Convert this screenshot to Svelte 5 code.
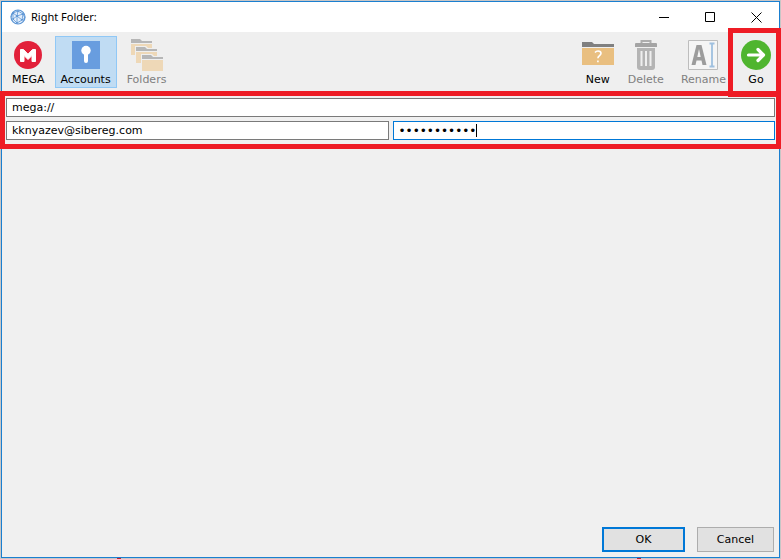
<script>
  let address = $state('mega://');
  let user = $state('kknyazev@sibereg.com');
  let password = $state('abcdefghijk');
</script>

{#snippet folder(x, y)}
  <g transform="translate({x} {y})">
    <path d="M-1-1h11l2 2h10v16H-1z" fill="#efefef" />
    <path d="M0 0h9l2 2h10v2H0z" fill="#b6b6b6" />
    <path d="M0 5h21v11H0z" fill="#eed8b7" />
  </g>
{/snippet}

<div class="desktop">
  <main class="window">
    <header class="titlebar">
      <svg class="globe" width="16" height="16" viewBox="0 0 16 16" fill="none" stroke="#5a94d4">
        <circle cx="8" cy="8" r="7" fill="#e4eefa" stroke-width="1.200" />
        <path d="M3 4l5-2 5 3-1 6-5 3-4-4zM3 4l4 3 6-2M7 7l-4 3M7 7l5 4M7 7l1-5M7 7v7M1 8l2-4M13 5l2 4-3 2" stroke-width=".8" />
        <path d="M2.500 4h1M7.500 2h1M12.500 5h1M6.500 7h1M2.500 10h1M11.500 11h1M6.500 14h1" stroke="#4c88cc" stroke-width="1.400" />
      </svg>
      <h1>Right Folder:</h1>
      <div class="controls">
        <button aria-label="Minimize"><svg width="11" height="11" viewBox="0 0 11 11"><path d="M0 5.500h10" /></svg></button>
        <button aria-label="Maximize"><svg width="11" height="11" viewBox="0 0 11 11"><path d="M.5.5h9v9h-9z" /></svg></button>
        <button aria-label="Close"><svg width="11" height="11" viewBox="0 0 11 11"><path d="M.5.5l10 10M10.500.5l-10 10" /></svg></button>
      </div>
    </header>

    <nav class="toolbar">
      <div class="group">
        <button class="tool">
          <svg width="32" height="32" viewBox="0 0 32 32">
            <circle cx="16" cy="16" r="14" fill="#e2203a" />
            <path d="M8.500 22.500v-12h3l4.500 4.700 4.500-4.700h3v12h-3.500v-6L16 20.500l-4-4v6z" fill="#fff" stroke="#fff" stroke-width="1" stroke-linejoin="round" />
          </svg>
          <span>MEGA</span>
        </button>
        <button class="tool selected">
          <svg width="32" height="32" viewBox="0 0 32 32">
            <path d="M2 2h28v28H2z" fill="#689ddf" />
            <circle cx="16" cy="11.500" r="4.700" fill="#fff" />
            <path d="M14 13h4v9a2 2 0 0 1-4 0z" fill="#fff" />
          </svg>
          <span>Accounts</span>
        </button>
        <button class="tool" disabled>
          <svg width="32" height="32" viewBox="0 0 32 32">
            {@render folder(0, 0)}
            {@render folder(5, 8)}
            {@render folder(11, 16)}
          </svg>
          <span>Folders</span>
        </button>
      </div>
      <div class="group actions">
        <button class="tool">
          <svg width="32" height="32" viewBox="0 0 32 32">
            <path d="M0 3h10l2 2h20v3H0z" fill="#808080" />
            <path d="M0 9h32v17H0z" fill="#e9bf80" />
            <path d="M13 13.500c.8-1 1.700-1.500 3-1.500 2 0 3 .9 3 2.300 0 2.200-3.100 2.300-3.100 4.900M15.900 21.500v1.700" fill="none" stroke="#fff" stroke-width="1.600" />
          </svg>
          <span>New</span>
        </button>
        <button class="tool" disabled>
          <svg width="32" height="32" viewBox="0 0 32 32" fill="none" stroke="#adadad">
            <path d="M11.500 5V2h9v3" stroke-width="2" />
            <path d="M5 5q0-1 1-1h20q1 0 1 1v3H5z" fill="#a4a4a4" stroke="none" />
            <path d="M7 9h18v19q0 3-3 3H10q-3 0-3-3z" fill="#b4b4b4" stroke="none" />
            <path d="M11.500 12v15M16 12v15M20.500 12v15" stroke="#efefef" stroke-width="2" />
          </svg>
          <span>Delete</span>
        </button>
        <button class="tool" disabled>
          <svg width="32" height="32" viewBox="0 0 32 32" fill="none">
            <path d="M1.500 1.500h29v29h-29z" fill="#f5f5f5" stroke="#bdbdbd" />
            <path d="M4.500 26l5-20h5l5 20h-4l-1-4.500h-5L8.500 26zM10.300 18h3.400L12 10z" fill="#9c9c9c" />
            <path d="M22.500 4.500h5M22.500 27.500h5M25 5v22" stroke="#9fc0df" stroke-width="1.800" />
          </svg>
          <span>Rename</span>
        </button>
        <button class="tool">
          <svg width="32" height="32" viewBox="0 0 32 32" fill="none">
            <circle cx="16" cy="16" r="15" fill="#4fb52f" />
            <path d="M8.500 16H23M18 10.500l5.500 5.500-5.500 5.500" stroke="#fff" stroke-width="3.200" stroke-linecap="round" stroke-linejoin="round" />
          </svg>
          <span>Go</span>
        </button>
      </div>
      <span class="mark mark-go"></span>
    </nav>

    <form class="login" id="login">
      <input type="text" aria-label="Address" bind:value={address} />
      <div class="row">
        <input type="text" aria-label="User name" bind:value={user} />
        <div class="secret">
          <input class="active" type="password" aria-label="Password" autocomplete="off" bind:value={password} />
          <span class="caret"></span>
        </div>
      </div>
      <span class="mark mark-form"></span>
    </form>

    <section class="content"></section>

    <footer>
      <button class="ok" form="login">OK</button>
      <button class="cancel">Cancel</button>
    </footer>
  </main>
</div>

<style>
  :global(body) {
    margin: 0;
    overflow: hidden;
  }
  .desktop {
    box-sizing: border-box;
    height: 100vh;
    padding: 1px;
    display: flex;
    background:
      linear-gradient(#c02030, #c02030) 15% 100% / 4px 1px no-repeat,
      linear-gradient(#c02030, #c02030) 82% 100% / 4px 1px no-repeat,
      #c8c6c6;
    font-family: "DejaVu Sans", Verdana, sans-serif;
    font-size: 11px;
    line-height: 14px;
    color: #000;
  }
  .window {
    flex: 1;
    min-width: 0;
    display: flex;
    flex-direction: column;
    background: #f0f0f0;
    border: 1px solid #1a7fd0;
  }
  button,
  input {
    box-sizing: border-box;
    margin: 0;
    font: inherit;
    color: inherit;
  }
  .titlebar {
    display: flex;
    align-items: center;
    height: 30px;
    padding-left: 8px;
    background: #fff;
  }
  h1 {
    flex: 1;
    margin: 0 0 0 5px;
    font: 11px/16px "Noto Sans", "Open Sans", sans-serif;
  }
  .controls {
    display: flex;
  }
  .controls button {
    width: 46px;
    height: 30px;
    padding: 0;
    display: flex;
    align-items: center;
    justify-content: center;
    border: 0;
    background: none;
  }
  .controls svg {
    fill: none;
    stroke: #000;
  }
  .toolbar {
    position: relative;
    display: flex;
    justify-content: space-between;
    padding: 4px;
    background: #efefef;
  }
  .group {
    display: flex;
    gap: 4px;
  }
  .actions {
    gap: 5px;
  }
  .tool {
    min-width: 38px;
    height: 52px;
    padding: 2px 5px;
    display: flex;
    flex-direction: column;
    align-items: center;
    gap: 2px;
    border: 1px solid transparent;
    background: none;
  }
  .tool svg {
    flex: none;
    margin: 0 -4px;
  }
  .tool:disabled {
    color: #808080;
  }
  .tool.selected {
    background: #c0dcf3;
    border-color: #90c8f6;
  }
  .login {
    position: relative;
    display: flex;
    flex-direction: column;
    gap: 4px;
    padding: 6px 4px 9px;
  }
  .login input {
    width: 100%;
    height: 19px;
    padding: 0 5px;
    border: 1px solid #7a7a7a;
    border-radius: 0;
    outline: 0;
    background: #fff;
  }
  .row {
    display: grid;
    grid-template-columns: 1fr 1fr;
    gap: 4px;
  }
  .secret {
    position: relative;
    display: flex;
  }
  .login .active {
    border-color: #0078d7;
    font-size: 12px;
  }
  .caret {
    position: absolute;
    left: 83px;
    top: 3px;
    width: 1px;
    height: 13px;
    background: #000;
  }
  .mark {
    position: absolute;
    z-index: 1;
    border: 5px solid #ee1c25;
    pointer-events: none;
  }
  .mark-go {
    inset: -4px -2px -5px auto;
    width: 43px;
  }
  .mark-form {
    inset: -1px -2px 0;
  }
  .content {
    flex: 1;
  }
  footer {
    display: flex;
    justify-content: flex-end;
    gap: 12px;
    padding: 5px;
  }
  footer button {
    height: 25px;
    padding: 0;
    background: #e1e1e1;
    border: 1px solid #adadad;
  }
  footer .ok {
    width: 83px;
    border: 2px solid #0078d7;
  }
  .cancel {
    width: 77px;
  }
</style>
